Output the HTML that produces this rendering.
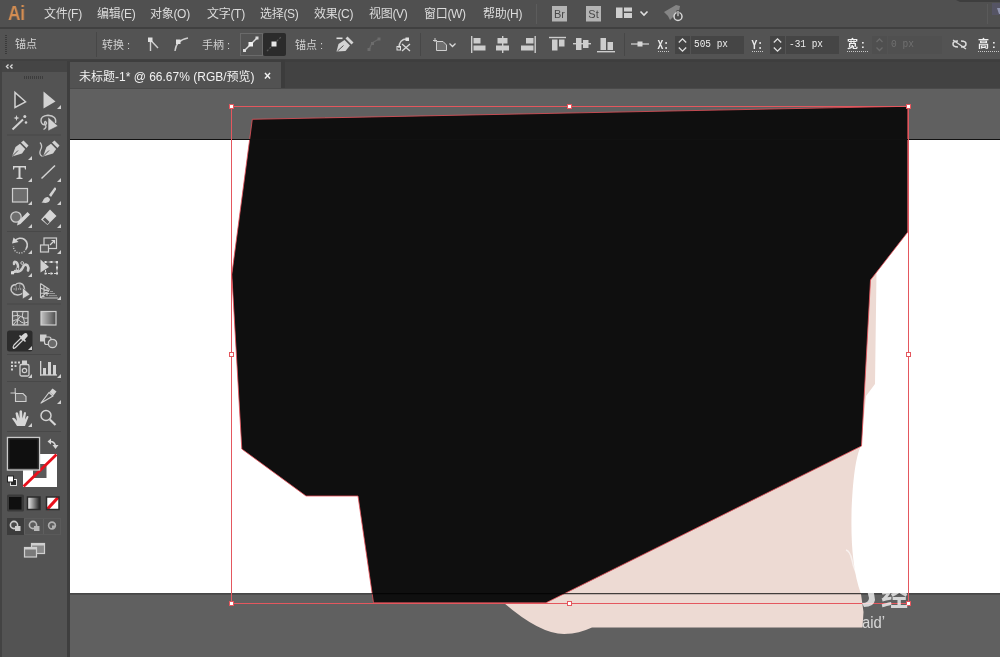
<!DOCTYPE html>
<html><head><meta charset="utf-8">
<style>
*{margin:0;padding:0;box-sizing:border-box}
html,body{width:1000px;height:657px;overflow:hidden;background:#606060;font-family:"Liberation Sans","Noto Sans CJK SC",sans-serif;}
.abs{position:absolute}
svg{will-change:transform}
#menubar{left:0;top:0;width:1000px;height:28px;background:#505050}
#ctrlbar{left:0;top:27px;width:1000px;height:34px;background:#535353;border-top:2px solid #404040;border-bottom:2px solid #404040}
#tabbar{left:70px;top:60px;width:930px;height:28px;background:#424242;border-top:2px solid #3e3e3e}
#tab{left:70px;top:62px;width:211px;height:26px;background:#525252;border-right:0}
#tools{left:0;top:61px;width:70px;height:596px;background:#535353;border-right:3px solid #3e3e3e}
#toolshead{left:0;top:61px;width:67px;height:11px;background:#454545}
#canvas{left:70px;top:88px;width:930px;height:569px;background:#606060;overflow:hidden;border-top:1px solid #4a4a4a}
.menu{will-change:transform;position:absolute;top:6px;font-size:12px;color:#dcdcdc;white-space:nowrap;line-height:16px;letter-spacing:-0.3px}
.lbl{will-change:transform;position:absolute;font-size:11px;color:#d0d0d0;white-space:nowrap;line-height:14px}
</style></head><body>
<div class="abs" id="menubar">
<span class="menu" style="left:8px;top:1px;font-size:20px;line-height:24px;color:#d38d52;transform:scaleX(0.86);transform-origin:0 0;font-weight:bold">Ai</span>
<span class="menu" style="left:44px">文件(F)</span>
<span class="menu" style="left:97px">编辑(E)</span>
<span class="menu" style="left:150px">对象(O)</span>
<span class="menu" style="left:207px">文字(T)</span>
<span class="menu" style="left:260px">选择(S)</span>
<span class="menu" style="left:314px">效果(C)</span>
<span class="menu" style="left:369px">视图(V)</span>
<span class="menu" style="left:424px">窗口(W)</span>
<span class="menu" style="left:483px">帮助(H)</span>
</div>
<div class="abs" id="ctrlbar">
<span class="lbl" style="left:15px;top:8px">锚点</span>
<span class="lbl" style="left:102px;top:9px">转换 :</span>
<span class="lbl" style="left:202px;top:9px">手柄 :</span>
<span class="lbl" style="left:295px;top:9px">锚点 :</span>
<span class="lbl" style="left:847px;top:8px;color:#f0f0f0;font-weight:bold">宽 :</span>
<span class="lbl" style="left:978px;top:8px;color:#f0f0f0;font-weight:bold">高 :</span>
</div>
<svg class="abs" style="left:0;top:0" width="1000" height="60" viewBox="0 0 1000 60">
<!-- menubar icons -->
<rect x="536" y="4" width="1" height="20" fill="#5c5c5c"/>
<rect x="552" y="6" width="15" height="15.500" fill="#b4b4b4"/>
<text x="559.500" y="18" font-size="11" fill="#484848" text-anchor="middle" font-family="Liberation Sans, sans-serif">Br</text>
<rect x="586" y="6" width="15" height="15.500" fill="#b4b4b4"/>
<text x="593.500" y="18" font-size="11" fill="#484848" text-anchor="middle" font-family="Liberation Sans, sans-serif">St</text>
<rect x="616" y="7.500" width="6.500" height="10.500" fill="#cfcfcf"/>
<rect x="624" y="7.500" width="8" height="4" fill="#cfcfcf"/>
<rect x="624" y="13" width="8" height="5" fill="#cfcfcf"/>
<path d="M640.500,11.500 L644,15 L647.500,11.500" fill="none" stroke="#e0e0e0" stroke-width="1.600"/>
<path d="M664,12 L676,5 L680,6 L679,11 L670,20 L668,16 Z" fill="#858585"/>
<circle cx="678" cy="16.500" r="4" fill="#4a4a4a" stroke="#d8d8d8" stroke-width="1.500"/>
<rect x="677" y="10.500" width="2" height="6" fill="#d8d8d8" stroke="#4a4a4a" stroke-width="0.800"/>
<!-- control bar -->
<path d="M6,35 L6,55" stroke="#3a3a3a" stroke-width="2" stroke-dasharray="1 1"/>
<rect x="96" y="32" width="1" height="25" fill="#474747"/>
<!-- convert icons -->
<path d="M150.500,40 L150.500,51 M150.500,40 L158,48" stroke="#cfcfcf" stroke-width="1.400" fill="none"/>
<rect x="148" y="37.500" width="4.500" height="4.500" fill="#e0e0e0"/>
<path d="M175,51 Q176,40 188,38" stroke="#cfcfcf" stroke-width="1.400" fill="none"/>
<rect x="176" y="39.500" width="4.500" height="4.500" fill="#e0e0e0"/>
<!-- handle buttons -->
<rect x="240.500" y="33.500" width="22" height="22" fill="#535353" stroke="#6a6a6a"/>
<path d="M244,51 L257,38" stroke="#dcdcdc" stroke-width="1.400"/>
<rect x="248.500" y="42" width="4.500" height="4.500" fill="#f0f0f0"/>
<rect x="243" y="49" width="3" height="3" fill="#dcdcdc"/><rect x="255.500" y="36.500" width="3" height="3" fill="#dcdcdc"/>
<rect x="263" y="33" width="23" height="23" rx="2" fill="#2b2b2b"/>
<path d="M267,51 L281,37" stroke="#5a5a5a" stroke-width="1.200" stroke-dasharray="2 1.500"/>
<rect x="271.500" y="41.500" width="5" height="5" fill="#e6e6e6"/>
<!-- anchor icons -->
<g transform="translate(-0.500,2)"><path d="M337,49.500 L339,42 L345,38 L350.500,43.500 L346,49 Z" fill="#d4d4d4"/>
<path d="M346,36.500 L352,42.500 L354,40.500 L348,34.500 Z" fill="#d4d4d4"/>
<rect x="337" y="35.500" width="6" height="1.600" fill="#e0e0e0"/>
<path d="M338,49 L344,43.500" stroke="#535353" stroke-width="1"/></g>
<path d="M369,50 L372,43 L379,39" stroke="#686868" stroke-width="1.300" fill="none"/>
<g fill="#6c6c6c"><rect x="367.500" y="48" width="3" height="3"/><rect x="371" y="42" width="3" height="3"/><rect x="377.500" y="37.500" width="3" height="3"/></g>
<path d="M399,48 Q399,39 407,39" stroke="#d0d0d0" stroke-width="1.400" fill="none"/>
<rect x="405.500" y="37.500" width="3.500" height="3.500" fill="#e0e0e0"/>
<rect x="397" y="46.500" width="3.500" height="3.500" fill="none" stroke="#e0e0e0"/>
<path d="M402,44 L410,51 M402,51 L410,44" stroke="#d8d8d8" stroke-width="1.300"/>
<rect x="420" y="33" width="1" height="23" fill="#474747"/>
<!-- crop/artboard icon -->
<path d="M433,40.500 L437,40.500 M435,38 L435,42" stroke="#cfcfcf" stroke-width="1"/>
<path d="M436.500,41.500 L443,41.500 L446.500,45 L446.500,50.500 L436.500,50.500 Z" fill="#6e6e6e" stroke="#cfcfcf" stroke-width="1"/>
<path d="M449.500,43.500 L452.500,46.500 L455.500,43.500" fill="none" stroke="#d8d8d8" stroke-width="1.300"/>
<!-- align icons -->
<g fill="#cdcdcd">
<rect x="471" y="36" width="1.400" height="17"/><rect x="473.500" y="38" width="7" height="5.500"/><rect x="473.500" y="45.500" width="12" height="5"/>
<rect x="502" y="36" width="1.400" height="17"/><rect x="497.500" y="38" width="10" height="5.500"/><rect x="496" y="45.500" width="13" height="5"/>
<rect x="534.500" y="36" width="1.400" height="17"/><rect x="526" y="38" width="7.500" height="5.500"/><rect x="521" y="45.500" width="12.500" height="5"/>
<rect x="549" y="36.800" width="17" height="1.400"/><rect x="552" y="39.500" width="5.500" height="11"/><rect x="559" y="39.500" width="5.500" height="7"/>
<rect x="573" y="43" width="18" height="1.400"/><rect x="576" y="38" width="5.500" height="12"/><rect x="583" y="40" width="5.500" height="8"/>
<rect x="597" y="51" width="18" height="1.400"/><rect x="600.500" y="38" width="5.500" height="12"/><rect x="607.500" y="42" width="5.500" height="8"/>
</g>
<rect x="624" y="33" width="1" height="23" fill="#474747"/>
<rect x="631" y="43.300" width="18" height="1.400" fill="#c4c4c4"/><rect x="637.500" y="41.500" width="5" height="5" fill="#d8d8d8"/>
<!-- X field -->
<rect x="675" y="36" width="15" height="18" fill="#444"/><rect x="691" y="36" width="53" height="18" fill="#454545"/>
<path d="M678.800,42.500 L682.500,38.800 L686.200,42.500 M678.800,47.500 L682.500,51.200 L686.200,47.500" fill="none" stroke="#e0e0e0" stroke-width="1.300"/>
<rect x="770" y="36" width="15" height="18" fill="#444"/><rect x="786" y="36" width="53" height="18" fill="#454545"/>
<path d="M773.800,42.500 L777.500,38.800 L781.200,42.500 M773.800,47.500 L777.500,51.200 L781.200,47.500" fill="none" stroke="#e0e0e0" stroke-width="1.300"/>
<rect x="872" y="36" width="15" height="18" fill="#4f4f4f"/><rect x="888" y="36" width="54" height="18" fill="#505050"/>
<path d="M876.500,42 L879.500,39 L882.500,42 M876.500,47.500 L879.500,50.500 L882.500,47.500" fill="none" stroke="#6a6a6a" stroke-width="1.300"/>
<g font-family="Liberation Mono, monospace" font-size="11" fill="#ececec">
<text x="657.500" y="48.500" font-size="12.500" textLength="11.500" lengthAdjust="spacingAndGlyphs" font-weight="bold">X:</text><text x="694" y="47" textLength="34" lengthAdjust="spacingAndGlyphs">505 px</text>
<text x="751.500" y="48.500" font-size="12.500" textLength="11.500" lengthAdjust="spacingAndGlyphs" font-weight="bold">Y:</text><text x="789" y="47" textLength="34" lengthAdjust="spacingAndGlyphs">-31 px</text>
<text x="891" y="47" fill="#707070" textLength="23" lengthAdjust="spacingAndGlyphs">0 px</text>
</g>
<g stroke="#c8c8c8" stroke-width="1" stroke-dasharray="1 1"><path d="M658,51.500 L669,51.500 M752,51.500 L763,51.500 M847,51.500 L868,51.500 M978,51.500 L1000,51.500"/></g>
<!-- link icon -->
<path d="M953,40 L966,49" stroke="#dcdcdc" stroke-width="1.400"/>
<path d="M958,41 Q953,41 953,44 Q953,47 958,47 M961,41 Q966,41 966,44 Q966,47 961,47" fill="none" stroke="#dcdcdc" stroke-width="1.500"/>
<rect x="987" y="4" width="1" height="20" fill="#5a5a5a"/>
<path d="M956,0 L1000,0 L1000,2 L960,2 Z" fill="#3a3a3a" fill-opacity="0.800"/>
<path d="M997,8 L1000,8 L1000,14 L999,14 Z" fill="#c8d4e8"/><rect x="992" y="3" width="8" height="12" fill="#5a5878" fill-opacity="0.500"/>
</svg>
<div class="abs" id="tabbar"></div>
<div class="abs" id="tab"><span class="lbl" style="left:9px;top:7.500px;font-size:12px;color:#f2f2f2">未标题-1* @ 66.67% (RGB/预览)</span><span class="lbl" style="left:194px;top:7px;font-size:12px;color:#f2f2f2;font-weight:bold">×</span></div>
<div class="abs" style="left:281px;top:60px;width:4px;height:28px;background:#3c3c3c"></div>
<div class="abs" id="tools"></div>
<div class="abs" id="toolshead"></div>
<svg class="abs" style="left:0;top:60px" width="68" height="597" viewBox="0 60 68 597">
<rect x="0" y="60" width="2" height="597" fill="#434343"/>
<path d="M8.500,64.500 L6.500,66.500 L8.500,68.500 M12.500,64.500 L10.500,66.500 L12.500,68.500" fill="none" stroke="#d8d8d8" stroke-width="1.400"/>
<g fill="#3c3c3c"><rect x="24" y="76" width="1" height="3"/><rect x="26" y="76" width="1" height="3"/><rect x="28" y="76" width="1" height="3"/><rect x="30" y="76" width="1" height="3"/><rect x="32" y="76" width="1" height="3"/><rect x="34" y="76" width="1" height="3"/><rect x="36" y="76" width="1" height="3"/><rect x="38" y="76" width="1" height="3"/><rect x="40" y="76" width="1" height="3"/><rect x="42" y="76" width="1" height="3"/></g>
<g fill="#484848"><rect x="7" y="134.500" width="54" height="1"/><rect x="7" y="231" width="54" height="1"/><rect x="7" y="303.500" width="54" height="1"/><rect x="7" y="354" width="54" height="1"/><rect x="7" y="381" width="54" height="1"/><rect x="7" y="431" width="54" height="1"/></g>
<!-- selection -->
<path d="M15,92.500 L15,107.500 L25.500,101.800 Z" fill="#474747" stroke="#d2d2d2" stroke-width="1.500" stroke-linejoin="miter"/>
<path d="M43.500,91.500 L43.500,108.500 L55.500,101.500 Z" fill="#d2d2d2"/>
<path d="M61,105 L61,109 L57,109 Z" fill="#d0d0d0"/>
<!-- wand -->
<path d="M12.500,129.500 L23,119.500" stroke="#d2d2d2" stroke-width="2"/>
<path d="M16.500,115 L17.300,117.200 L19.500,118 L17.300,118.800 L16.500,121 L15.700,118.800 L13.500,118 L15.700,117.200 Z" fill="#d2d2d2"/>
<circle cx="24.800" cy="116.500" r="1.500" fill="#d2d2d2"/><circle cx="26" cy="122.500" r="1.300" fill="#d2d2d2"/>
<!-- lasso -->
<path d="M55.500,123 Q57,116 48,115.300 Q40.500,116 41,121 Q41.500,125.500 45.800,124.500 Q47.500,123 45.500,121.500 Q43.500,122.500 45.500,125 Q47,127.500 43.500,129.500" fill="none" stroke="#c8c8c8" stroke-width="1.400"/>
<path d="M48,117 L48,131 L58,126 Z" fill="#d2d2d2" stroke="#535353" stroke-width="0.600"/>
<!-- pen -->
<g id="pen"><path d="M12,156.500 L15.500,147 L20,143.800 L25.200,149 L22,153.500 Z" fill="#d2d2d2"/><path d="M21,142.500 L23.500,140.500 L28.500,145.500 L26.500,148 Z" fill="#d2d2d2"/><path d="M12.500,156 L18,150.500" stroke="#535353" stroke-width="1"/></g>
<path d="M32,156 L32,160 L28,160 Z" fill="#d0d0d0"/>
<path d="M40,142.500 Q43,146 40.500,150 Q38.500,154.500 42.500,156.500" fill="none" stroke="#c8c8c8" stroke-width="1.300"/>
<g transform="translate(31,0)"><path d="M12,156.500 L15.500,147 L20,143.800 L25.200,149 L22,153.500 Z" fill="#d2d2d2"/><path d="M21,142.500 L23.500,140.500 L28.500,145.500 L26.500,148 Z" fill="#d2d2d2"/><path d="M12.500,156 L18,150.500" stroke="#535353" stroke-width="1"/></g>
<!-- T -->
<path d="M13,166 L26,166 L26,169.500 L25,169.500 L24.500,167.600 L20.500,167.600 L20.500,177.500 L22.500,178 L22.500,179 L16.500,179 L16.500,178 L18.500,177.500 L18.500,167.600 L14.500,167.600 L14,169.500 L13,169.500 Z" fill="#d6d6d6"/>
<path d="M32,178 L32,182 L28,182 Z" fill="#d0d0d0"/>
<path d="M41.500,178.500 L55,165.500" stroke="#d2d2d2" stroke-width="1.500"/>
<path d="M61,178 L61,182 L57,182 Z" fill="#d0d0d0"/>
<!-- rect -->
<rect x="12.500" y="188.500" width="15" height="13.500" fill="#6e6e6e" stroke="#cfcfcf" stroke-width="1.200"/>
<path d="M32,201 L32,205 L28,205 Z" fill="#d0d0d0"/>
<path d="M49,195 L54.500,187.500 Q56.500,187 56,189.500 L51,197 Z" fill="#d2d2d2"/>
<path d="M41.500,202.500 Q43,201.500 43.500,199.500 Q45,196.500 48,197 L50,199 Q50,202.500 45.500,203 Z" fill="#d2d2d2"/>
<path d="M61,201 L61,205 L57,205 Z" fill="#d0d0d0"/>
<!-- shaper -->
<circle cx="16" cy="217" r="5.200" fill="#6e6e6e" stroke="#cfcfcf" stroke-width="1.300"/>
<path d="M17,225.500 L18,221.500 L27.500,212 L30,214.500 L20.500,224 Z" fill="#d6d6d6"/>
<path d="M32,224 L32,228 L28,228 Z" fill="#d0d0d0"/>
<path d="M41,219.500 L50,209.500 L56.500,216 L47.500,225 Z" fill="#d6d6d6"/>
<path d="M42.800,219.600 L45,217.400 L49.600,222 L47.400,224.200 Z" fill="#535353"/>
<path d="M61,224 L61,228 L57,228 Z" fill="#d0d0d0"/>
<!-- rotate -->
<path d="M15,241 A6.500,6.500 0 1 1 26,249" fill="none" stroke="#cfcfcf" stroke-width="1.600"/>
<path d="M26,249 A6.500,6.500 0 0 1 13.500,246" fill="none" stroke="#bdbdbd" stroke-width="1.400" stroke-dasharray="1.200 1.300"/>
<path d="M12,243.500 L13.500,237.500 L18.500,242 Z" fill="#d6d6d6"/>
<path d="M32,250 L32,254 L28,254 Z" fill="#d0d0d0"/>
<rect x="44" y="238" width="12.500" height="10.500" fill="none" stroke="#cfcfcf" stroke-width="1.200"/>
<rect x="40.500" y="245" width="8" height="7" fill="#5c5c5c" stroke="#cfcfcf" stroke-width="1.200"/>
<path d="M50,245 L54,241 M51.500,240.500 L54.500,240.500 L54.500,243.500" fill="none" stroke="#d6d6d6" stroke-width="1.200"/>
<path d="M61,250 L61,254 L57,254 Z" fill="#d0d0d0"/>
<!-- width tool -->
<path d="M12.500,272.500 Q17,272 18,268 Q18.500,264 16,262 Q13.500,261 14,264" fill="none" stroke="#cdcdcd" stroke-width="2.400" stroke-linecap="round"/>
<path d="M15,271 Q20,273 22.500,268 Q24.500,263 27.500,265.500 Q29,267.500 28,270.500" fill="none" stroke="#cdcdcd" stroke-width="2.600" stroke-linecap="round"/>
<rect x="11" y="271.300" width="3" height="3" fill="#dcdcdc"/>
<circle cx="17.500" cy="268.800" r="1.300" fill="#535353" stroke="#dcdcdc" stroke-width="0.700"/>
<circle cx="22.200" cy="263" r="1.400" fill="#535353" stroke="#dcdcdc" stroke-width="0.800"/>
<path d="M32,273 L32,277 L28,277 Z" fill="#d0d0d0"/>
<path d="M40.500,259.500 L40.500,272.500 L49,267 Z" fill="#d2d2d2"/>
<rect x="45.500" y="262" width="11.500" height="11.500" fill="none" stroke="#cfcfcf" stroke-width="1.100" stroke-dasharray="2 1"/>
<g fill="#dcdcdc"><rect x="44.500" y="261" width="2" height="2"/><rect x="56" y="261" width="2" height="2"/><rect x="44.500" y="272.500" width="2" height="2"/><rect x="56" y="272.500" width="2" height="2"/><rect x="56" y="266.700" width="2" height="2"/><rect x="50.300" y="272.500" width="2" height="2"/><rect x="50.300" y="261" width="2" height="2"/></g>
<!-- shape builder -->
<path d="M13,293 Q10.500,291 11.200,288 Q12,284.500 15.500,284.800 Q17,282.800 20,283.200 Q23.500,283.800 24,287 Q25.500,290 23,293 Q20,295.500 16.500,294.800 Q14,294.500 13,293 Z" fill="none" stroke="#c8c8c8" stroke-width="1.400"/>
<path d="M13.500,289 L22,289" stroke="#c8c8c8" stroke-width="1.200" stroke-dasharray="1.200 1"/>
<path d="M15.500,285 Q17,288 16,291 M20,283.500 Q19,287 20.500,290" fill="none" stroke="#a0a0a0" stroke-width="0.800"/>
<path d="M22.500,287.500 L22.500,299 L30,294.500 Z" fill="#d2d2d2" stroke="#535353" stroke-width="0.600"/>
<path d="M32,296 L32,300 L28,300 Z" fill="#d0d0d0"/>
<!-- perspective grid -->
<path d="M40.500,283.500 L40.500,298 M40.500,283.500 L49.500,289.500 M40.500,298 L58,298 M44,286 L44,297 M47,288 L47,296 M40.500,288 L49,291.500 M40.500,293 L49.500,293.500 M40.500,298 L49.500,289.500" fill="none" stroke="#c8c8c8" stroke-width="1.100"/>
<path d="M50,291.500 L53,291.500 M50,293.500 L55,293.500 M49,295.700 L57,295.700" stroke="#9a9a9a" stroke-width="1"/>
<path d="M61,296 L61,300 L57,300 Z" fill="#d0d0d0"/>
<!-- mesh -->
<rect x="12.500" y="311.500" width="15.500" height="13.500" fill="#5e5e5e" stroke="#cfcfcf" stroke-width="1.200"/>
<path d="M13,316 Q18,314 22,317 Q25,319 28,318 M13,321 Q18,318 21,322 Q24,324.500 28,322 M17,312 Q19,317 17,325 M23,312 Q21,316 24,320 Q25,323 24,325 M13,325 L20,317" fill="none" stroke="#cfcfcf" stroke-width="1"/>
<defs><linearGradient id="gr1" x1="0" x2="1" y1="0" y2="0"><stop offset="0" stop-color="#c4c4c4"/><stop offset="1" stop-color="#4c4c4c"/></linearGradient>
<linearGradient id="gr2" x1="0" x2="1" y1="0" y2="0"><stop offset="0" stop-color="#f4f4f4"/><stop offset="1" stop-color="#1c1c1c"/></linearGradient></defs>
<rect x="41" y="311.500" width="15" height="13.500" fill="url(#gr1)" stroke="#cfcfcf" stroke-width="1.200"/>
<!-- eyedropper selected -->
<rect x="7" y="330.500" width="25.500" height="21" rx="2.500" fill="#2c2c2c"/>
<path d="M13.500,348.500 Q12.500,347 14,345 L21,338 L23,340 L16,347 Q14.500,348.500 13.500,348.500 Z" fill="#2c2c2c" stroke="#d6d6d6" stroke-width="1.200"/>
<path d="M20,337 L23,334.500 Q25,332 27,333.500 Q28.500,335.500 26.500,337.500 L24,340.500 Z" fill="#d6d6d6"/>
<path d="M19.500,335.500 L25.500,341.500" stroke="#d6d6d6" stroke-width="1.600"/>
<path d="M32,346 L32,350 L28,350 Z" fill="#d0d0d0"/>
<!-- blend -->
<rect x="40" y="334.500" width="6.500" height="7" fill="#cfcfcf"/>
<rect x="44.500" y="337" width="6.500" height="7.500" rx="2" fill="#535353" stroke="#cfcfcf" stroke-width="1.200"/>
<circle cx="52.500" cy="343.500" r="4.200" fill="#6a6a6a" stroke="#cfcfcf" stroke-width="1.300"/>
<!-- symbol sprayer -->
<g fill="#d2d2d2"><rect x="11" y="361.500" width="2" height="2"/><rect x="14.500" y="361.500" width="2" height="2"/><rect x="18" y="361.500" width="2" height="2"/><rect x="11" y="365" width="2" height="2"/><rect x="14.500" y="365" width="2" height="2"/><rect x="11" y="368.500" width="2" height="2"/><rect x="22" y="360.500" width="5" height="3.500"/></g>
<rect x="20" y="364.500" width="9" height="11.500" rx="1.500" fill="none" stroke="#cfcfcf" stroke-width="1.300"/>
<circle cx="24.500" cy="370.500" r="2.200" fill="none" stroke="#cfcfcf" stroke-width="1.200"/>
<path d="M32,374 L32,378 L28,378 Z" fill="#d0d0d0"/>
<!-- graph -->
<g fill="#d2d2d2"><rect x="40" y="361" width="1.300" height="14.500"/><rect x="40" y="374.300" width="17" height="1.300"/><rect x="43" y="368" width="3" height="7"/><rect x="48" y="362" width="3" height="13"/><rect x="53" y="365" width="3" height="10"/></g>
<path d="M61,374 L61,378 L57,378 Z" fill="#d0d0d0"/>
<!-- artboard -->
<path d="M10.500,393 L16,393 M15.200,388 L15.200,393.500" stroke="#cfcfcf" stroke-width="1"/>
<path d="M15.500,393.500 L23,393.500 L26,396.500 L26,401.500 L15.500,401.500 Z" fill="#6c6c6c" stroke="#cfcfcf" stroke-width="1.100"/>
<!-- slice -->
<path d="M41,403 L49,392.500 L53,396 Z" fill="#535353" stroke="#d2d2d2" stroke-width="1.200" stroke-linejoin="round"/>
<path d="M49.500,392 L52.500,388.500 L56.500,391.500 L53.500,395.500 Z" fill="#d2d2d2"/>
<path d="M61,400 L61,404 L57,404 Z" fill="#d0d0d0"/>
<!-- hand -->
<path d="M17,426 Q14,421 12,418.500 Q13,417 15,418.500 L17,421 L15.500,413 Q17,411.500 18,413 L19.500,418.500 L19.500,411 Q21,409.500 22,411 L22.500,418.500 L24,412.500 Q25.500,411.500 26,413 L25,419.500 L27,416 Q28.500,415.500 28.500,417 Q26.500,422 25,426 Z" fill="#d6d6d6"/>
<path d="M32,423 L32,427 L28,427 Z" fill="#d0d0d0"/>
<circle cx="46" cy="415.500" r="5" fill="none" stroke="#d2d2d2" stroke-width="1.500"/>
<path d="M49.800,419.500 L55.500,425" stroke="#d6d6d6" stroke-width="2.200"/>
<!-- fill/stroke -->
<rect x="23" y="454" width="34" height="33" fill="#fff"/>
<rect x="33" y="464" width="13.500" height="14" fill="#5a5a5a"/>
<path d="M23.500,486.500 L56.500,454.500" stroke="#e8101c" stroke-width="2.800"/>
<rect x="7.500" y="437.500" width="32" height="32.500" fill="#0f0f0f" stroke="#c9c9c9" stroke-width="1.400"/>
<rect x="9" y="439" width="29" height="29.500" fill="none" stroke="#2a2a2a" stroke-width="1"/>
<path d="M49.500,441.500 Q54.500,441 55.500,446" fill="none" stroke="#d6d6d6" stroke-width="1.500"/>
<path d="M47.500,441.500 L51,438.500 L51,444.500 Z M52.500,445 L58.500,445 L55.500,449 Z" fill="#d6d6d6"/>
<rect x="10.500" y="479.500" width="6" height="6" fill="#2a2a2a" stroke="#e0e0e0" stroke-width="1"/>
<rect x="7.500" y="476" width="6" height="6" fill="#fff" stroke="#222" stroke-width="1"/>
<!-- color mode row -->
<rect x="7" y="494.500" width="17" height="17" rx="1.500" fill="#3a3a3a"/>
<rect x="9" y="497" width="12.500" height="12.500" fill="#0f0f0f"/>
<rect x="27.500" y="497" width="12.500" height="12.500" fill="url(#gr2)" stroke="#2c2c2c" stroke-width="1.500"/>
<rect x="46.500" y="497" width="12.500" height="12.500" fill="#fff"/>
<path d="M47,509.500 L58.500,497" stroke="#e8101c" stroke-width="3.200"/>
<rect x="46.500" y="497" width="12.500" height="12.500" fill="none" stroke="#2c2c2c" stroke-width="1.500"/>
<!-- draw modes -->
<rect x="7.500" y="518.500" width="53" height="16" fill="none" stroke="#5a5a5a" stroke-width="1"/>
<rect x="7" y="518" width="17" height="17" fill="#3c3c3c"/>
<path d="M24.500,519 L24.500,534 M43.500,519 L43.500,534" stroke="#5f5f5f" stroke-width="1"/>
<circle cx="14" cy="525" r="3.600" fill="#4a4a4a" stroke="#cfcfcf" stroke-width="1.600"/><rect x="15" y="526" width="5.500" height="5" fill="#cfcfcf"/>
<circle cx="33" cy="525" r="3.600" fill="#5c5c5c" stroke="#b8b8b8" stroke-width="1.600"/><rect x="34" y="526" width="5.500" height="5" fill="#b8b8b8"/>
<circle cx="52" cy="525.500" r="3.400" fill="#5c5c5c" stroke="#b0b0b0" stroke-width="1.600"/><rect x="52" y="525.500" width="3" height="2.500" fill="#b0b0b0"/>
<!-- screen mode -->
<rect x="31.500" y="543.500" width="13" height="10" fill="#8a8a8a" stroke="#cfcfcf" stroke-width="1.200"/>
<rect x="31" y="543" width="14" height="2.500" fill="#cfcfcf"/>
<rect x="24.500" y="547.500" width="12" height="9.500" fill="#7a7a7a" stroke="#cfcfcf" stroke-width="1.200"/>
<rect x="24" y="547" width="13" height="2.500" fill="#cfcfcf"/>
</svg>

<div class="abs" id="canvas">
<svg class="abs" style="left:0;top:-1px" width="930" height="569" viewBox="70 88 930 569">
<rect x="69" y="140" width="932" height="454" fill="#fff"/>
<path d="M871,272 L876.500,272 L875,384 L866,396 L861,446 C856,455 852.500,480 851.500,515 C851,545 853,572 861,594 L863.500,612 L862.500,627.500 L592,627.500 Q578,634 564,634 Q540,634 504,603 L546,603 Z" fill="#eddad3"/>
<polygon points="252.300,119.300 907.800,106.300 907.800,232 870.500,280 861.500,446 546,602.800 373.500,602.800 358,496 306,496 241.800,449 231.800,274.500" fill="#0f0f0f" stroke="#e8525a" stroke-width="0.800"/>
<path d="M69.500,594 L69.500,139.500 L1001,139.500" fill="none" stroke="#111" stroke-width="1"/>
<path d="M69,593.700 L1001,593.700" fill="none" stroke="#000" stroke-opacity="0.720" stroke-width="1.200"/>
<rect x="231.500" y="106.500" width="677" height="497" fill="none" stroke="#e4575e" stroke-width="1"/>
<rect x="229.5" y="104.5" width="4" height="4" fill="#fff" stroke="#e4575e" stroke-width="1"/><rect x="567.5" y="104.5" width="4" height="4" fill="#fff" stroke="#e4575e" stroke-width="1"/><rect x="906.5" y="104.5" width="4" height="4" fill="#fff" stroke="#e4575e" stroke-width="1"/><rect x="229.5" y="601.5" width="4" height="4" fill="#fff" stroke="#e4575e" stroke-width="1"/><rect x="906.5" y="601.5" width="4" height="4" fill="#fff" stroke="#e4575e" stroke-width="1"/><rect x="229.5" y="352.5" width="4" height="4" fill="#fff" stroke="#e4575e" stroke-width="1"/><rect x="906.5" y="352.5" width="4" height="4" fill="#fff" stroke="#e4575e" stroke-width="1"/><rect x="567.5" y="601.5" width="4" height="4" fill="#fff" stroke="#e4575e" stroke-width="1"/>
<g fill="#fff" fill-opacity="0.750" font-family="Liberation Sans, Noto Sans CJK SC, sans-serif" font-weight="bold">
<path d="M846,550 Q850,551 852,560 Q854,572 862,582 Q866,588 864,592" fill="none" stroke="#fff" stroke-opacity="0.600" stroke-width="1.500"/>
<path d="M866,586 L873,586 L875,600 Q874,607 864,607 L862,603 Q869,603 869,598 Z"/>
<text x="881" y="605.500" font-size="27">经</text>
<text x="862" y="628" font-size="16" font-weight="normal" textLength="23" lengthAdjust="spacingAndGlyphs">aid’</text>
</g>
</svg>
</div>
</body></html>
